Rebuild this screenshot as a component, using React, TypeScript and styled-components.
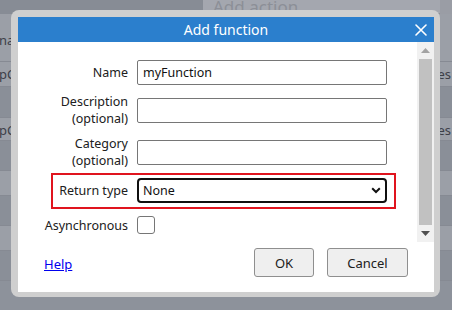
import styled, { createGlobalStyle } from 'styled-components';

const GlobalStyle = createGlobalStyle`
  html, body {
    margin: 0;
    padding: 0;
  }
  body {
    width: 452px;
    height: 310px;
    overflow: hidden;
    background: #8d929b;
    font-family: 'Noto Sans', 'Open Sans', sans-serif;
  }
`;

const Page = styled.div`
  position: relative;
  width: 452px;
  height: 310px;
  overflow: hidden;
  display: flex;
  flex-direction: column;
`;

const TopBar = styled.div`
  display: flex;
  height: 14px;
  flex-shrink: 0;
`;

const TopLeft = styled.div`
  width: 203px;
  background: #878c95;
`;

const TopTab = styled.div`
  width: 237px;
  background: #a4a7af;
  border-bottom: 1px solid #8e929a;
  color: #8c8f97;
  font-size: 17px;
  line-height: 14px;
  padding-left: 10px;
  box-sizing: border-box;
  overflow: hidden;
`;

const TopRight = styled.div`
  flex: 1;
  background: #9a9da5;
`;

const BgRow = styled.div<{ $h: number; $dark?: boolean; $pad?: number }>`
  display: flex;
  justify-content: space-between;
  height: ${(p) => p.$h}px;
  padding-top: ${(p) => p.$pad ?? 4}px;
  box-sizing: border-box;
  flex-shrink: 0;
  background: ${(p) => (p.$dark ? '#8a8f98' : '#9b9fa7')};
  border-bottom: 1px solid #868a93;
  font-size: 13px;
  line-height: 16px;
  color: #3d4048;
  overflow: hidden;
`;

const BgLeft = styled.span`
  margin-left: -1px;
  white-space: nowrap;
`;

const BgRight = styled.span`
  margin-right: 1px;
  white-space: nowrap;
`;

const Dialog = styled.div`
  position: absolute;
  left: 11px;
  top: 10px;
  width: 429px;
  height: 287px;
  box-sizing: border-box;
  padding: 7px 6px 5px 7px;
  background: #cfcfcf;
  border-radius: 8px;
  display: flex;
  flex-direction: column;
`;

const TitleBar = styled.div`
  position: relative;
  height: 25px;
  flex-shrink: 0;
  background: #2b7fcd;
  color: #ffffff;
  font-size: 14px;
  display: flex;
  align-items: center;
  justify-content: center;
`;

const CloseButton = styled.button`
  position: absolute;
  right: 6px;
  top: 6px;
  width: 14px;
  height: 14px;
  padding: 0;
  border: 0;
  background: transparent;
  display: flex;
  align-items: center;
  justify-content: center;
`;

const Body = styled.div`
  flex: 1;
  background: #ffffff;
  display: flex;
  flex-direction: column;
`;

const Content = styled.div`
  height: 200px;
  display: flex;
`;

const Form = styled.div`
  flex: 1;
  padding-top: 18px;
  display: flex;
  flex-direction: column;
  gap: 8px;
`;

const Row = styled.div`
  display: flex;
  align-items: center;
  gap: 9px;
`;

const HighlightRow = styled(Row)`
  align-self: flex-start;
  margin: -4px 0 -1px 33px;
  padding: 3px 7px 4px 0;
  border: 2px solid #e0141e;
`;

const Label = styled.label<{ $width?: number }>`
  width: ${(p) => p.$width ?? 110}px;
  flex-shrink: 0;
  text-align: right;
  font-size: 12.5px;
  line-height: 17px;
  color: #202020;
`;

const TextInput = styled.input`
  width: 250px;
  height: 25px;
  box-sizing: border-box;
  margin: 0;
  padding: 0 5px;
  border: 1px solid #767676;
  border-radius: 2px;
  font-family: inherit;
  font-size: 12.5px;
  color: #111;
  outline: none;
`;

const SelectBox = styled.div`
  position: relative;
  width: 250px;
  height: 25px;
`;

const Select = styled.select`
  width: 100%;
  height: 100%;
  box-sizing: border-box;
  margin: 0;
  padding: 0 4px;
  appearance: none;
  border: 2px solid #101010;
  border-radius: 4px;
  background: #ffffff;
  font-family: inherit;
  font-size: 12.5px;
  color: #111;
  outline: none;
`;

const Chevron = styled.svg`
  position: absolute;
  right: 6px;
  top: 9px;
  pointer-events: none;
`;

const CheckBox = styled.span`
  width: 18px;
  height: 18px;
  box-sizing: border-box;
  border: 1px solid #767676;
  border-radius: 3px;
  background: #fff;
`;

const Scrollbar = styled.div`
  width: 17px;
  background: #f1f1f1;
  display: flex;
  flex-direction: column;
`;

const ArrowCell = styled.div`
  height: 17px;
  display: flex;
  align-items: center;
  justify-content: center;
`;

const Thumb = styled.div`
  flex: 1;
  margin: 0 2px;
  background: #c1c1c1;
`;

const Footer = styled.div`
  display: flex;
  align-items: center;
  justify-content: space-between;
  padding: 6px 26px 15px 26px;
`;

const HelpLink = styled.a`
  color: #0000ee;
  text-decoration: underline;
  font-size: 13px;
  margin-top: 2px;
`;

const Buttons = styled.div`
  display: flex;
  gap: 13px;
`;

const Button = styled.button<{ $w: number }>`
  width: ${(p) => p.$w}px;
  height: 29px;
  box-sizing: border-box;
  border: 1px solid #8f8f8f;
  border-radius: 3px;
  background: #efefef;
  font-family: inherit;
  font-size: 13px;
  color: #202020;
  padding: 0;
`;

const bgRows = [
  { h: 48, left: 'naire', right: '', pad: 18 },
  { h: 25, left: 'pCount', right: 'Yes', pad: 4 },
  { h: 31, left: '', right: '', dark: true },
  { h: 23, left: 'pCount', right: 'Yes', pad: 4 },
  { h: 30, left: '', right: '', dark: true },
  { h: 25, left: '', right: '' },
  { h: 30, left: '', right: '', dark: true },
  { h: 25, left: '', right: '' },
  { h: 30, left: '', right: '', dark: true },
];

export default function App() {
  return (
    <Page>
      <GlobalStyle />
      <TopBar>
        <TopLeft />
        <TopTab>Add action</TopTab>
        <TopRight />
      </TopBar>
      {bgRows.map((r, i) => (
        <BgRow key={i} $h={r.h} $dark={r.dark} $pad={r.pad}>
          <BgLeft>{r.left}</BgLeft>
          <BgRight>{r.right}</BgRight>
        </BgRow>
      ))}

      <Dialog>
        <TitleBar>
          Add function
          <CloseButton aria-label="Close">
            <svg width="12" height="12" viewBox="0 0 12 12">
              <path d="M1 1L11 11M11 1L1 11" stroke="#fff" strokeWidth="1.6" strokeLinecap="round" />
            </svg>
          </CloseButton>
        </TitleBar>
        <Body>
          <Content>
            <Form>
              <Row>
                <Label>Name</Label>
                <TextInput defaultValue="myFunction" />
              </Row>
              <Row>
                <Label>
                  Description
                  <br />
                  (optional)
                </Label>
                <TextInput />
              </Row>
              <Row>
                <Label>
                  Category
                  <br />
                  (optional)
                </Label>
                <TextInput />
              </Row>
              <HighlightRow>
                <Label $width={75}>Return type</Label>
                <SelectBox>
                  <Select defaultValue="None">
                    <option>None</option>
                  </Select>
                  <Chevron width="10" height="7" viewBox="0 0 10 7">
                    <path d="M1.2 1.3L5 5L8.8 1.3" fill="none" stroke="#111" strokeWidth="2" />
                  </Chevron>
                </SelectBox>
              </HighlightRow>
              <Row>
                <Label>Asynchronous</Label>
                <CheckBox />
              </Row>
            </Form>
            <Scrollbar>
              <ArrowCell>
                <svg width="9" height="5" viewBox="0 0 9 5">
                  <path d="M0 5L4.5 0L9 5Z" fill="#a3a3a3" />
                </svg>
              </ArrowCell>
              <Thumb />
              <ArrowCell>
                <svg width="9" height="5" viewBox="0 0 9 5">
                  <path d="M0 0L4.5 5L9 0Z" fill="#505050" />
                </svg>
              </ArrowCell>
            </Scrollbar>
          </Content>
          <Footer>
            <HelpLink href="#">Help</HelpLink>
            <Buttons>
              <Button $w={60}>OK</Button>
              <Button $w={81}>Cancel</Button>
            </Buttons>
          </Footer>
        </Body>
      </Dialog>
    </Page>
  );
}
